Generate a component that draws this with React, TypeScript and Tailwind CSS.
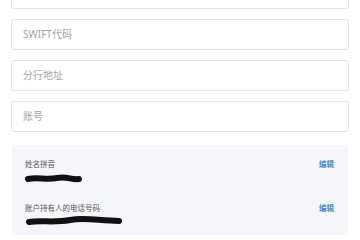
export default function App() {
    const fields = ['SWIFT代码', '分行地址', '账号'];

    return (
        <div
            className="w-[360px] h-[240px] overflow-hidden bg-white"
            style={{ fontFamily: '"Noto Sans", "Noto Sans CJK SC", sans-serif' }}
        >
            <div className="-mt-[22px] px-[11px] flex flex-col gap-[10px]">
                {/* 上一个输入框（被裁切） */}
                <div className="h-[31px] rounded-[3px] border border-[#e2e2e2] bg-white" />
                {fields.map((f) => (
                    <div
                        key={f}
                        className="h-[31px] rounded-[3px] border border-[#e2e2e2] bg-white flex items-center px-[11px] text-[10px] text-[#a3a3a3]"
                    >
                        {f}
                    </div>
                ))}
            </div>

            <div className="mx-[12px] mt-[13px] h-[90px] rounded-[3px] bg-[#f5f6fa] px-[13px] pt-[14px]">
                <div className="flex justify-between items-start">
                    <div className="flex flex-col">
                        <span className="text-[7.5px] leading-[10px] text-[#555]">姓名拼音</span>
                        <svg width="60" height="12" className="mt-[4px]">
                            <path d="M3 6 C12 4, 22 7, 32 5 S 46 7, 54 6" stroke="#111" strokeWidth="6" strokeLinecap="round" fill="none" />
                        </svg>
                    </div>
                    <span className="text-[7.5px] leading-[10px] font-bold text-[#4a87c7] mr-[1px]">编辑</span>
                </div>
                <div className="flex justify-between items-start mt-[18px]">
                    <div className="flex flex-col">
                        <span className="text-[7.5px] leading-[10px] text-[#555]">账户持有人的电话号码</span>
                        <svg width="100" height="12" className="mt-[2px]">
                            <path d="M4 7 C15 5, 30 8, 45 5 S 75 6, 94 6" stroke="#111" strokeWidth="6" strokeLinecap="round" fill="none" />
                        </svg>
                    </div>
                    <span className="text-[7.5px] leading-[10px] font-bold text-[#4a87c7] mr-[1px]">编辑</span>
                </div>
            </div>
        </div>
    );
}
